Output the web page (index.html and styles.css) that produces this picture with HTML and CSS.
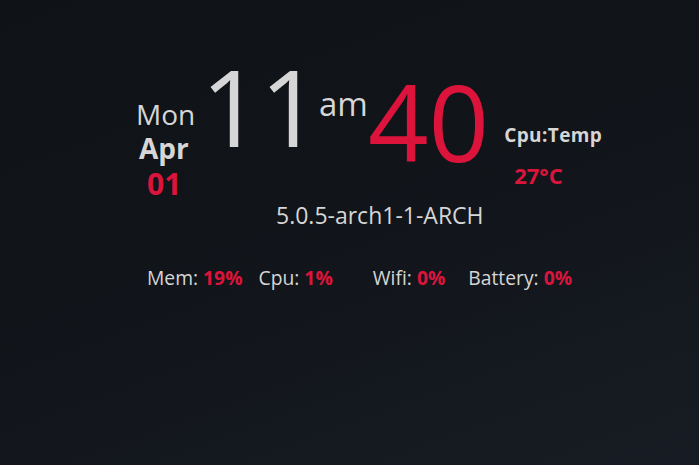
FILE: index.html
```html
<!DOCTYPE html>
<html>
<head>
<meta charset="utf-8">
<link rel="stylesheet" href="styles.css">
</head>
<body>
<div class="widget">
  <div class="clock-row">
    <div class="date">
      <div class="day">Mon</div>
      <div class="month">Apr</div>
      <div class="daynum">01</div>
    </div>
    <div class="hour">11</div>
    <div class="ampm">am</div>
    <div class="minutes">40</div>
    <div class="temp">
      <div class="temp-label">Cpu:Temp</div>
      <div class="temp-value">27°C</div>
    </div>
  </div>
  <div class="kernel">5.0.5-arch1-1-ARCH</div>
  <div class="stats">
    <span class="stat stat-mem">Mem: <b class="val">19%</b></span>
    <span class="stat stat-cpu">Cpu: <b class="val">1%</b></span>
    <span class="stat stat-wifi">Wifi: <b class="val">0%</b></span>
    <span class="stat stat-bat">Battery: <b class="val">0%</b></span>
  </div>
</div>
</body>
</html>
```

FILE: styles.css
```css
html, body {
  margin: 0;
  height: 100%;
}
body {
  background: linear-gradient(160deg, #0f1216 0%, #111419 45%, #171c24 100%);
  font-family: "Open Sans", "Noto Sans", sans-serif;
  color: #d6d6d6;
  overflow: hidden;
}
.widget {
  width: 699px;
  height: 465px;
}
.clock-row {
  display: flex;
  align-items: flex-start;
  padding-left: 136px;
}
.date {
  display: flex;
  flex-direction: column;
  align-items: flex-start;
  width: 65px;
}
.day {
  font-size: 28px;
  line-height: 28px;
  margin-top: 100px;
}
.month {
  font-size: 28px;
  line-height: 28px;
  font-weight: 700;
  margin-top: 6px;
  margin-left: 3px;
}
.daynum {
  font-size: 30px;
  line-height: 30px;
  font-weight: 700;
  color: #dc143c;
  margin-top: 7px;
  margin-left: 11px;
}
.hour {
  font-size: 106px;
  line-height: 106px;
  margin-top: 53px;
  letter-spacing: -1.6px;
}
.ampm {
  font-size: 33px;
  line-height: 33px;
  margin-top: 87px;
}
.minutes {
  font-size: 106px;
  line-height: 106px;
  color: #dc143c;
  margin-top: 68px;
}
.temp {
  display: flex;
  flex-direction: column;
  align-items: flex-start;
  margin-top: 126px;
  margin-left: 15px;
}
.temp-label {
  font-size: 19px;
  line-height: 19px;
  font-weight: 700;
  letter-spacing: 0.4px;
}
.temp-value {
  font-size: 22px;
  line-height: 22px;
  font-weight: 700;
  color: #dc143c;
  margin-top: 19px;
  margin-left: 10px;
}
.kernel {
  font-size: 23px;
  line-height: 23px;
  margin-top: 5px;
  padding-left: 276px;
}
.stats {
  display: flex;
  padding-left: 147px;
  margin-top: 41px;
  font-size: 19.3px;
  line-height: 20px;
}
.stat .val {
  color: #dc143c;
  font-weight: 700;
}
.stat-mem { margin-right: 16px; }
.stat-cpu { margin-right: 40px; }
.stat-wifi { margin-right: 23px; }
```
